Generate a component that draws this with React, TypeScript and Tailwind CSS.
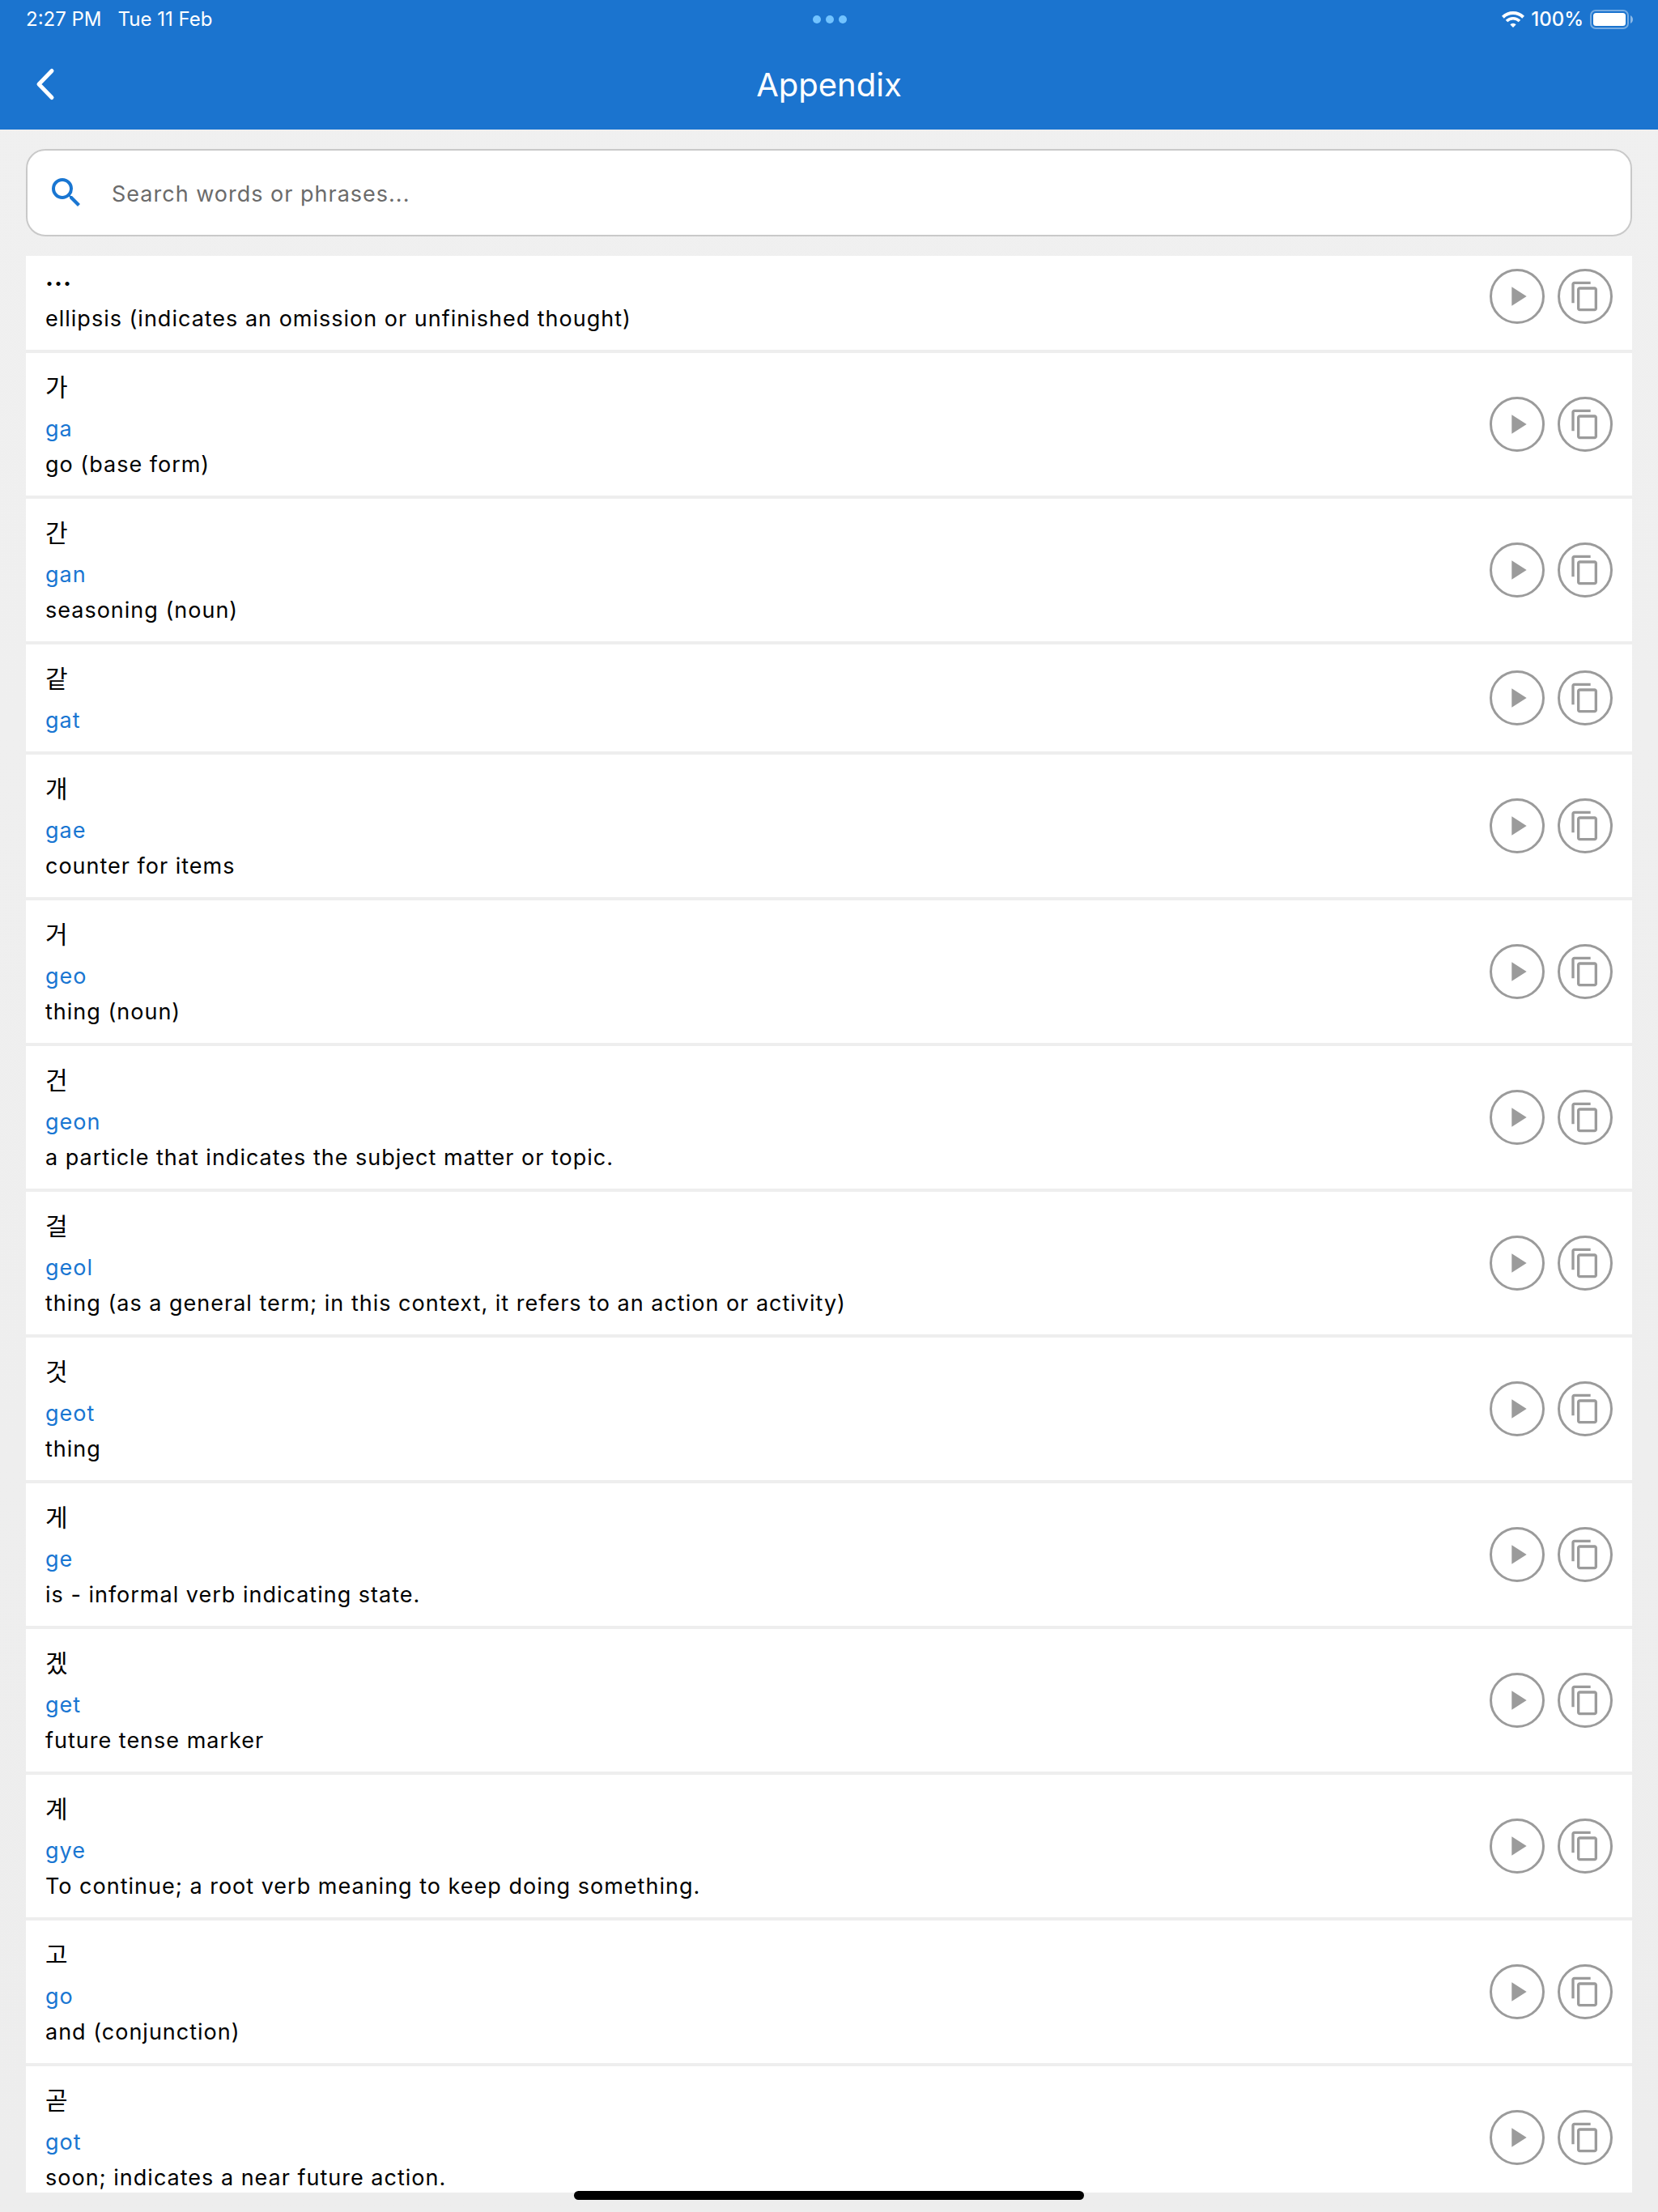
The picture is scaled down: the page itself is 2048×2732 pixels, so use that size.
import { useState } from 'react';
import type { ReactNode } from 'react';
import { MdContentCopy, MdPlayArrow, MdSearch } from 'react-icons/md';

type Entry = {
  word: string;
  roman?: string;
  meaning?: string;
};

const ENTRIES: Entry[] = [
  { word: '...', meaning: 'ellipsis (indicates an omission or unfinished thought)' },
  { word: '가', roman: 'ga', meaning: 'go (base form)' },
  { word: '간', roman: 'gan', meaning: 'seasoning (noun)' },
  { word: '같', roman: 'gat' },
  { word: '개', roman: 'gae', meaning: 'counter for items' },
  { word: '거', roman: 'geo', meaning: 'thing (noun)' },
  { word: '건', roman: 'geon', meaning: 'a particle that indicates the subject matter or topic.' },
  {
    word: '걸',
    roman: 'geol',
    meaning: 'thing (as a general term; in this context, it refers to an action or activity)',
  },
  { word: '것', roman: 'geot', meaning: 'thing' },
  { word: '게', roman: 'ge', meaning: 'is - informal verb indicating state.' },
  { word: '겠', roman: 'get', meaning: 'future tense marker' },
  { word: '계', roman: 'gye', meaning: 'To continue; a root verb meaning to keep doing something.' },
  { word: '고', roman: 'go', meaning: 'and (conjunction)' },
  { word: '곧', roman: 'got', meaning: 'soon; indicates a near future action.' },
];

export default function App() {
  const [query, setQuery] = useState('');
  const needle = query.trim().toLowerCase();
  const rows = ENTRIES.filter((e) =>
    [e.word, e.roman, e.meaning].some((t) => t?.toLowerCase().includes(needle))
  );

  return (
    <div className="relative flex h-screen flex-col bg-linear-to-b from-[#f0f0f0] to-[#ededed] font-['Inter','Noto_Sans_CJK_KR',sans-serif] text-black">
      <header className="bg-[#1b74cf] text-white">
        <StatusBar />
        <TitleBar title="Appendix" />
      </header>
      <main className="flex min-h-0 flex-1 flex-col gap-6 px-8 py-6">
        <label className="flex h-27 shrink-0 items-center gap-8 rounded-3xl border-2 border-[#c9c9c9] bg-white px-6">
          <MdSearch className="size-12 text-[#1976d2]" />
          <input
            type="search"
            aria-label="Search"
            value={query}
            onChange={(e) => setQuery(e.target.value)}
            placeholder="Search words or phrases..."
            className="flex-1 pt-1 text-[27px] tracking-[1px] outline-none placeholder:text-[#6b6b6b]"
          />
        </label>
        <div className="min-h-0 flex-1 overflow-hidden">
          <ul className="-mt-4">
            {rows.map((e) => (
              <EntryRow key={e.word} entry={e} />
            ))}
          </ul>
        </div>
      </main>
      <div className="absolute bottom-[15px] left-1/2 h-[11px] w-[630px] -translate-x-1/2 rounded-full bg-black" />
    </div>
  );
}

function EntryRow({ entry }: { entry: Entry }) {
  // punctuation entries have no romanisation and are set heavier
  const weight = entry.roman ? 'font-normal' : 'font-bold';
  return (
    <li className="flex items-center justify-between border-b-4 border-[#eeeeee] bg-white px-6">
      <div className="flex flex-col pt-[18px] pb-4 text-[27px] leading-[44px] tracking-[1px]">
        <span className={`mb-[6px] text-[30px] leading-[48px] ${weight}`}>{entry.word}</span>
        {entry.roman && <span className="text-[#1976d2]">{entry.roman}</span>}
        {entry.meaning && <span>{entry.meaning}</span>}
      </div>
      <div className="flex gap-4">
        <RoundButton label={`Play ${entry.word}`}>
          <MdPlayArrow className="size-10" />
        </RoundButton>
        <RoundButton label={`Copy ${entry.word}`}>
          <MdContentCopy className="size-10" />
        </RoundButton>
      </div>
    </li>
  );
}

function RoundButton({ label, children }: { label: string; children: ReactNode }) {
  return (
    <button
      type="button"
      aria-label={label}
      className="flex size-17 items-center justify-center rounded-full border-3 border-[#9b9b9b] text-[#9b9b9b]"
    >
      {children}
    </button>
  );
}

function StatusBar() {
  return (
    <div className="grid h-12 grid-cols-3 items-center pr-[30px] pl-8 text-[24px] leading-none">
      <div className="flex gap-5">
        <span>2:27 PM</span>
        <span>Tue 11 Feb</span>
      </div>
      <div className="flex justify-center gap-[6px]">
        <span className="size-[10px] rounded-full bg-[#72c3ff]" />
        <span className="size-[10px] rounded-full bg-[#72c3ff]" />
        <span className="size-[10px] rounded-full bg-[#72c3ff]" />
      </div>
      <div className="flex items-center justify-end gap-2">
        <svg viewBox="0 0 28 20" className="h-5 w-7" aria-hidden="true">
          <g fill="none" stroke="#fff">
            <path d="M1.4 7.2a18 18 0 0 1 25.2 0" strokeWidth="4" />
            <path d="M6 12a11.3 11.3 0 0 1 16 0" strokeWidth="3.6" />
          </g>
          <path d="M14 20l-3.7-3.7a5.3 5.3 0 0 1 7.4 0z" fill="#fff" />
        </svg>
        <span className="font-medium">100%</span>
        <svg viewBox="0 0 54 24" className="h-6 w-[54px]" aria-hidden="true">
          <rect x="1" y="1" width="46" height="22" rx="6" fill="none" stroke="#fff" strokeOpacity="0.4" strokeWidth="2" />
          <rect x="4" y="4" width="40" height="16" rx="3.5" fill="#fff" />
          <path d="M50 7c4 2 4 8 0 10z" fill="#fff" fillOpacity="0.5" />
        </svg>
      </div>
    </div>
  );
}

function TitleBar({ title }: { title: string }) {
  return (
    <div className="grid h-28 grid-cols-[1fr_auto_1fr] items-center px-8">
      <button type="button" aria-label="Back" className="flex size-12 items-center justify-center">
        <svg viewBox="0 0 48 48" className="size-12" fill="none" stroke="currentColor" aria-hidden="true">
          <path d="M32 7.5L16 24l16 16.5" strokeWidth="5" strokeLinecap="round" strokeLinejoin="round" />
        </svg>
      </button>
      <h1 className="pt-[2px] text-[40px] leading-none">{title}</h1>
    </div>
  );
}
